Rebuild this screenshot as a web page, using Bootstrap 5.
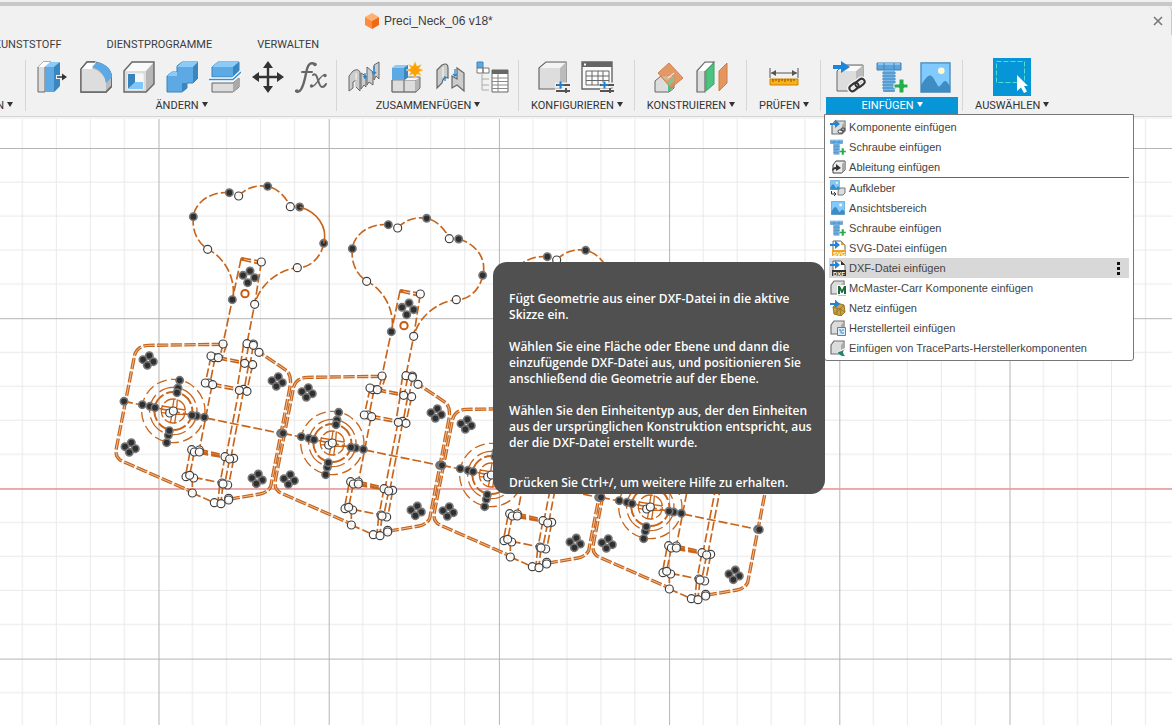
<!DOCTYPE html>
<html lang="de">
<head>
<meta charset="utf-8">
<meta name="viewport" content="width=device-width, initial-scale=1">
<title>Preci_Neck_06 v18*</title>
<link rel="stylesheet" href="https://cdn.jsdelivr.net/npm/bootstrap@5.3.0/dist/css/bootstrap.min.css">
<style>
  body { font-family: "Liberation Sans", Arial, sans-serif; font-size: 11px; line-height: 16px; color: #3c3c3c; background: #fff; }
  .app-header { background: #f1f1f1; border-bottom: 1px solid #d4d4d4; box-shadow: 0 2px 0 #f4f4f4; position: relative; z-index: 2; }
  .window-edge { height: 6px; background: #c8c8c8; border-top: 2px solid #f1f1f1; }
  .doc-bar { height: 29px; font-size: 12px; border-right: 1px solid #c8c8c8; border-top-right-radius: 5px; }
  .doc-title { margin-left: 364px; }
  .ws-tabs { height: 20px; gap: 45px; margin-left: -6px; font-family: Roboto, Arial, sans-serif; }
  .ws-tabs a { color: #3c3c3c; text-decoration: none; }
  .ribbon { height: 61px; }
  .tool-group { position: relative; padding: 2px 5px 0; }
  .tool-group::after { content: ""; position: absolute; right: 0; top: 5px; height: 51px; width: 1px; background: #d6d6d6; }
  .tool-group:last-child::after { display: none; }
  .cut-group { width: 26px; }
  .tool-btn { width: 43px; height: 40px; padding: 0; border: 0; background: none; }
  .tool-btn.picked svg { background: #0696d7; }
  .group-label { height: 17px; padding: 0 7px; border: 0; background: none; color: #333; white-space: nowrap; line-height: 17px; font-family: Roboto, Arial, sans-serif; }
  .group-label.opened { width: 132px; background: #0696d7; color: #fff; }
  .caret { display: inline-block; border: 3px solid transparent; border-top: 5px solid currentColor; border-bottom: 0; margin-left: 3px; vertical-align: 2px; }
  .insert-menu { position: absolute; left: 3px; top: 59px; width: 310px; background: #fff; border: 1px solid #777; border-radius: 0 0 3px 3px; padding: 2px 4px; z-index: 5; }
  .insert-menu button { height: 20px; width: 100%; padding: 0 6px 0 1px; border: 0; background: none; color: #444; text-align: left; gap: 3px; }
  .insert-menu button.hot { background: #d8d8d8; }
  .insert-menu hr { margin: 0; border-top: 1px solid #666; opacity: 1; }
  .hint { position: absolute; right: 100%; top: 147px; width: 332px; padding: 29px 10px 3px 16px; border-radius: 14px; background: #505050; color: #fff; font: 600 12px/16px "Open Sans", "Noto Sans", sans-serif; white-space: nowrap; }
  .hint p { margin: 0 0 16px; }
  .hint p:last-child { margin: 24px 0 0; }
  .sketch-area { height: calc(100vh - 117px); overflow: hidden; }
  .sketch-area svg { display: block; width: 100%; height: 100%; }
  .ln { fill: none; stroke: #c8651b; stroke-width: 5; stroke-dasharray: 27 9; }
  .solid { stroke-dasharray: none; }
  .dbl { fill: none; stroke: #c8651b; stroke-width: 10; stroke-dasharray: 34 7; }
  .core { fill: none; stroke: #fbe9da; stroke-width: 2; }
  .pts-o { fill: none; marker: url(#open); }
  .pts-f { fill: none; marker: url(#full); }
</style>
</head>
<body class="overflow-hidden">

<svg width="0" height="0" class="position-absolute" aria-hidden="true">
  <defs>
    <symbol id="cube" viewBox="0 0 32 32">
      <path d="M1 10 9 1H31L23 10z" fill="#fafafa"/><path d="M23 10 31 1V23L23 31z" fill="#b6b6b6"/><path d="M1 10H23V31H1z" fill="#dcdcdc"/>
      <path d="M1 10 9 1H31V23L23 31H1z" fill="none" stroke="#666" stroke-width="1.4"/>
    </symbol>
    <symbol id="screw" viewBox="0 0 32 32">
      <path d="M1 2H25V9H1z" fill="#5da4dc" stroke="#3f83b9"/><path d="M2 2H24V4H2z" fill="#8ac4ef"/><path d="M8 2V9M18 2V9" stroke="#3f83b9"/>
      <path d="M7 9H19V30L17 31H9L7 30z" fill="#78b6e6"/><path d="M6 12H20M6 15H20M6 18H20M6 21H20M6 24H20M6 27H20M7 30H19" stroke="#3f83b9"/>
      <path d="M23 18h5v5h4v4h-4v5h-5v-5h-5v-4h5z" fill="#23b04b" stroke="#f4f4f4"/>
    </symbol>
    <symbol id="photo" viewBox="0 0 32 32">
      <path d="M1 1H31V31H1z" fill="#80caff"/><path d="M1 24C5 18 8 13 11 14S17 23 19 25 24 18 27 20 30 24 31 25V31H1z" fill="#3d8cc4"/>
      <circle cx="22" cy="9" r="3.4" fill="#fff9d0"/><path d="M1 1H31V31H1z" fill="none" stroke="#4387b8" stroke-width="1.3"/>
    </symbol>
    <symbol id="part" viewBox="0 0 16 16">
      <path d="M1 5 4 1H14V11L11 14H1z" fill="#dcdcdc" stroke="#707070" stroke-width="1.2"/><path d="M11 5 14 1.500V11L11 13.500z" fill="#aaa"/>
    </symbol>
    <symbol id="arrow" viewBox="0 0 16 16"><path d="M0 4H5V0.500L10 5 5 9V6H0z" fill="#1c86dc"/></symbol>
    <symbol id="sheet" viewBox="0 0 16 16"><path d="M3 1H11L15 5V12H3z" fill="#fff" stroke="#666"/><path d="M11 1V5H15z" fill="currentColor"/></symbol>
    <marker id="open" viewBox="0 0 30 30" refX="15" refY="15" markerWidth="30" markerHeight="30" markerUnits="userSpaceOnUse"><circle cx="15" cy="15" r="12" fill="#fff" fill-opacity=".9" stroke="#404040" stroke-width="3.500"/></marker>
    <marker id="full" viewBox="0 0 30 30" refX="15" refY="15" markerWidth="30" markerHeight="30" markerUnits="userSpaceOnUse"><circle cx="15" cy="15" r="11" fill="#303030" stroke="#777" stroke-width="5"/></marker>
    <pattern id="grid" width="170.200" height="170.200" patternUnits="userSpaceOnUse" x="158.500" y="31">
      <path d="M34 0V171M68 0V171M102 0V171M136 0V171M0 34H171M0 68H171M0 102H171M0 136H171" stroke="#e9e9e9" fill="none"/>
      <path d="M0 0V171M0 0H171" stroke="#b4b4b4" stroke-width="2" fill="none"/>
    </pattern>

    <g id="cluster"><path class="pts-f" d="M3-15-16-3 15 3-3 14"/></g>

    <!-- one tuner head with its neck, three units per pixel -->
    <g id="head">
      <path class="ln" d="M400 375C404 315 368 258 323 238 290 215 276 180 280 140 285 95 335 63 388 68M416 78C440 52 470 44 503 49 535 55 560 85 571 110M671 220C665 260 630 295 592 293 540 298 480 340 464 403"/>
      <path class="ln" d="M423 267 397 389 369 521M427 264 484 274M427 270 480 282M484 276 464 403 441 520"/>
      <circle cx="427" cy="267" r="6" fill="#c8651b"/>
      <circle cx="435" cy="371" r="11" fill="#fff" stroke="#c85a10" stroke-width="6"/>
      <path class="pts-f" d="M388 68 503 49 599 111 671 220 280 140 397 389"/>
      <path class="pts-f" d="M450 303 429 316 464 323 443 338"/>
      <path class="pts-o" d="M416 78 571 110 323 238 592 293 484 276 464 403"/>
    </g>

    <!-- body plate -->
    <g id="plate">
      <path class="dbl" d="M369 43 145 46Q112 48 104 75L48 360Q46 385 68 394L277 486"/>
      <path class="dbl" d="M386 508 480 492Q502 488 512 470L571 165Q574 135 560 122L477 66"/>
      <path class="core" d="M369 43 145 46Q112 48 104 75L48 360Q46 385 68 394L277 486M386 508 480 492Q502 488 512 470L571 165Q574 135 560 122L477 66"/>
      <path class="ln" d="M72 214 547 311M277 489 343 518"/>
      <path class="ln" d="M369 42 359 84M381 42 366 84M431 42 422 100M446 46 436 100M460 46 450 104M333 80 316 159M345 84 330 160M355 80 434 96M355 87 434 102M338 160 418 175M338 168 418 182M424 100 410 181M446 104 432 181M458 104 441 181"/>
      <path class="ln" d="M336 166 298 360M417 181 378 380M431 181 392 387M298 358 375 376M298 364 375 382M298 370 389 386M270 366 256 440M283 366 268 440M281 442 366 459M281 366 279 376M375 380 360 459M389 387 374 462M401 387 386 465M277 444 277 489M359 465 354 515M369 465 363 515"/>
      <g fill="none" stroke="#c8651b" stroke-width="4">
        <circle cx="220" cy="243" r="95" stroke-dasharray="31 13"/><circle cx="220" cy="243" r="71" stroke-dasharray="58 14"/>
        <circle cx="220" cy="243" r="57" stroke-width="6" stroke-dasharray="40 9"/><circle cx="220" cy="243" r="36" stroke-dasharray="38 8"/>
        <path d="M222 207 218 233 185 228M232 208 230 236 256 240M211 279 216 251 186 248M224 281 228 252 254 254"/>
      </g>
      <path class="pts-f" d="M239 151 234 174 231 188M127 224 150 229 165 233M72 214 290 258 276 256 313 262M205 316 208 302 200 338M542 310 547 311"/>
      <use href="#cluster" x="145" y="92"/><use href="#cluster" x="532" y="155"/><use href="#cluster" x="91" y="353"/><use href="#cluster" x="472" y="447"/>
      <path class="pts-o" d="M369 42 460 42 441 41 460 46 477 67 342 83 333 78 355 83 458 104 434 100 327 159 316 159 338 164 431 178 441 184 418 181"/>
      <path class="pts-o" d="M209 249 220 243M275 359 298 360 283 366 298 366M375 380 401 385 389 387M258 440 281 444 269 436M366 459 383 465 369 462M277 489 343 518 363 521 386 505 386 510"/>
    </g>
    <g id="unit"><use href="#head" y="-480"/><use href="#plate"/></g>
  </defs>
</svg>

<header class="app-header">
  <div class="window-edge"></div>
  <div class="doc-bar d-flex align-items-center">
    <div class="doc-title d-flex align-items-center gap-1">
      <svg width="16" height="16" viewBox="0 0 16 16"><path d="M8 0 15 4 8 8 1 4z" fill="#ffb072"/><path d="M1 4 8 8V16L1 12z" fill="#ff8a3d"/><path d="M15 4V12L8 16V8z" fill="#f26a10"/></svg>
      <span>Preci_Neck_06 v18*</span>
    </div>
    <button class="tool-btn ms-auto w-auto h-auto px-2 py-1" aria-label="Schließen"><svg class="d-block" width="10" height="10" viewBox="0 0 10 10"><path d="M1 1 9 9M9 1 1 9" stroke="#777" stroke-width="1.600"/></svg></button>
  </div>
  <nav class="ws-tabs d-flex align-items-center" aria-label="Arbeitsbereiche">
    <a href="#">KUNSTSTOFF</a><a href="#">DIENSTPROGRAMME</a><a href="#">VERWALTEN</a>
  </nav>

  <div class="ribbon d-flex">
    <div class="tool-group cut-group d-flex flex-column align-items-end justify-content-start overflow-hidden">
      <div class="tool-btn"></div>
      <button class="group-label me-1 px-1">ERSTELLEN<span class="caret"></span></button>
    </div>

    <div class="tool-group d-flex flex-column align-items-center">
      <div class="d-flex">
        <button class="tool-btn" aria-label="Drücken/Ziehen"><svg width="32" height="32" viewBox="0 0 32 32"><path d="M1 6 6 1H14L8 6V31H1z" fill="#ddd" stroke="#666"/><path d="M1 6 6 1H14L8 6z" fill="#fff"/><path d="M8 6 14 1H22V26L17 31H8z" fill="#5ca9e4"/><path d="M8 6 13 1H23L17 6z" fill="#8ccbf8"/><path d="M17 6 23 1V25L17 31z" fill="#3a86c0"/><path d="M19 16H27" stroke="#f1f1f1" stroke-width="4"/><path d="M20 16H27" stroke="#333" stroke-width="1.500"/><path d="M25 12.500 30 16 25 19.500z" fill="#333"/></svg></button>
        <button class="tool-btn" aria-label="Abrundung"><svg width="32" height="32" viewBox="0 0 32 32"><path d="M1 8 7 1H14Q31 4 32 18V25L26 31H1z" fill="#bbb" stroke="#666" stroke-width="1.300"/><path d="M1 8H14Q25 12 26 22V31H1z" fill="#ddd"/><path d="M1 8 7 1H16L12 8z" fill="#fff"/><path d="M12 6 17 1Q31 4 32 16L26 22Q24 10 12 6z" fill="#5ca9e4"/><path d="M1 8 7 1H15M1 8V31H26L32 25V18" fill="none" stroke="#666" stroke-width="1.300"/></svg></button>
        <button class="tool-btn" aria-label="Schale"><svg width="32" height="32" viewBox="0 0 32 32"><use href="#cube"/><path d="M5 13H20V28H5z" fill="#fff" stroke="#fff"/><path d="M5 13H12V22L5 28z" fill="#3784bd"/><path d="M5 28 12 21H20V28z" fill="#80c6fb"/><path d="M12 13V21H20V13z" fill="#f7f7f7"/></svg></button>
        <button class="tool-btn" aria-label="Kombinieren"><svg width="32" height="32" viewBox="0 0 32 32"><path d="M1 15 6 11H11V5L16 1H32V17L27 22H21V27L16 31H1z" fill="#5ca9e4" stroke="#3b84bb"/><path d="M1 15 6 11H11V15zM11 6 16 1H32L27 6z" fill="#8ccbf8"/><path d="M27 6 32 1V17L27 22zM16 31V22H21V27z" fill="#3a86c0"/></svg></button>
        <button class="tool-btn" aria-label="Körper teilen"><svg width="32" height="32" viewBox="0 0 32 32"><path d="M3 6 9 1H30V10L24 16H3z" fill="#5ca9e4" stroke="#3b84bb"/><path d="M3 6 9 1H30L24 6z" fill="#8ccbf8"/><path d="M24 6 30 1V11L24 16z" fill="#3a86c0"/><path d="M3 22H24L30 17V26L24 31H3z" fill="#ddd" stroke="#666"/><path d="M24 22 30 17V26L24 31z" fill="#aaa"/><path d="M0 18.500H24L32 11" fill="none" stroke="#fff" stroke-width="4"/><path d="M0 18.500H24L32 11" fill="none" stroke="#3090dd" stroke-width="1.500"/></svg></button>
        <button class="tool-btn" aria-label="Verschieben"><svg width="32" height="32" viewBox="0 0 32 32"><path d="M16 4V28M4 16H28" stroke="#333" stroke-width="2.400"/><path d="M16 0 21 7H11zM16 32 21 25H11zM0 16 7 11V21zM32 16 25 11V21z" fill="#333"/></svg></button>
        <button class="tool-btn" aria-label="Parameter ändern"><svg width="32" height="32" viewBox="0 0 32 32"><g fill="none" stroke="#666" stroke-linecap="round"><path d="M1 30C5 33 8 26 10 17L12 8Q14 0 20 3" stroke-width="2.400"/><path d="M7 11H17M18 14C23 10 23 26 27 26 29 26 30 25 31 23" stroke-width="2"/><path d="M30 14C26 12 20 28 16 25" stroke-width="1.400"/></g><g fill="#666"><circle cx="20" cy="3.500" r="1.800"/><circle cx="30" cy="14.500" r="1.700"/><circle cx="16.500" cy="25" r="1.700"/><circle cx="2" cy="30" r="1.800"/></g></svg></button>
      </div>
      <button class="group-label">ÄNDERN<span class="caret"></span></button>
    </div>

    <div class="tool-group d-flex flex-column align-items-center">
      <div class="d-flex">
        <button class="tool-btn" aria-label="Gelenk"><svg width="32" height="32" viewBox="0 0 32 32"><g fill="#ccc" stroke="#666"><path d="M1 30V15L5 10Q10 7 12 11V30L8 26V19L5 21V27z"/><path d="M13 28V12L18 15V26L16 24z"/><path d="M19 24V6L25 11V24L21 21z"/><path d="M26 4 31 1V18L28 15 26 19z"/></g><path d="M8 12V26" stroke="#f5f5f5"/><path d="M17 12V18M15.500 15 17 17 18.500 15M26 5V13M24 11 26 13 28 11" fill="none" stroke="#2587d4" stroke-width="1.300"/></svg></button>
        <button class="tool-btn" aria-label="Neue Komponente"><svg width="32" height="32" viewBox="0 0 32 32"><path d="M1 19H13V31H1zM13 19H25V31H13z" fill="#ddd" stroke="#888"/><path d="M13 19 17 16H29L25 19z" fill="#f7f7f7"/><path d="M25 19 29 16V27L25 31z" fill="#b5b5b5"/><path d="M13 19 17 16H29V27L25 31H1V19" fill="none" stroke="#707070"/><path d="M1 7 5 4H17V16L13 19H1z" fill="#5ca9e4"/><path d="M1 7 5 4H17L13 7z" fill="#8ccbf8"/><path d="M13 7 17 4V16L13 19z" fill="#3a86c0"/><path d="M24 0 26 5 31 3 28 7.500 33 9 28 11 31 15 26 13 24 18 22 13 17 15 20 11 15 9 20 7 17 3 22 5z" fill="#fba200" stroke="#f1f1f1" stroke-width=".5"/></svg></button>
        <button class="tool-btn" aria-label="Wie gebaut"><svg width="32" height="32" viewBox="0 0 32 32"><g fill="#ccc" stroke="#666" stroke-width="1.200"><path d="M3 27V9L8 4Q14 1 14 7V17Q9 15 8 22z"/><path d="M18 27V15L23 18V7L30 12V30L23 24z"/></g><path d="M9 6V16" stroke="#fafafa"/><path d="M11 15V20M21 8V15M19 13 21 15 23 13" fill="none" stroke="#2587d4" stroke-width="1.300"/></svg></button>
        <button class="tool-btn" aria-label="Stückliste"><svg width="34" height="32" viewBox="0 0 34 32"><path d="M1 1H7V7H1z" fill="#5ca9e4" stroke="#3b84bb"/><path d="M1 7H7V12H1zM7 7H13V12H7z" fill="#fff" stroke="#777"/><path d="M6 13V29H13M6 18H13M6 24H13" fill="none" stroke="#aaa"/><path d="M16 9H32V31H16z" fill="#fff" stroke="#666"/><path d="M16 9H32V13H16z" fill="#666"/><path d="M16 17H32M16 20.500H32M16 24H32M16 27.500H32M22 13V31" stroke="#888"/></svg></button>
      </div>
      <button class="group-label">ZUSAMMENFÜGEN<span class="caret"></span></button>
    </div>

    <div class="tool-group d-flex flex-column align-items-center">
      <div class="d-flex">
        <button class="tool-btn" aria-label="Modell konfigurieren"><svg width="34" height="32" viewBox="0 0 34 32"><path d="M1 7 8 1H28V22L22 28H1z" fill="#ddd" stroke="#666" stroke-width="1.200"/><path d="M22 7 28 1V22L22 28z" fill="#bbb"/><path d="M2 7 8 2H27L22 7z" fill="#f4f4f4"/><path d="M17 24H33M17 30H33" stroke="#f1f1f1" stroke-width="5"/><path d="M18 24H32M18 30H32M28 27V32" stroke="#555" stroke-width="2"/><path d="M19 24H26M22.500 20.500V27.500" stroke="#1c7fd0" stroke-width="2"/></svg></button>
        <button class="tool-btn" aria-label="Konfigurationstabelle"><svg width="34" height="32" viewBox="0 0 34 32"><path d="M1 1H31V28H1z" fill="#fbfbfb" stroke="#666" stroke-width="1.400"/><path d="M1 1H31V6H1z" fill="#666"/><path d="M3 3.500H5" stroke="#fff" stroke-width="2"/><path d="M5 10H28V24H5zM5 15H28M5 19.500H28M11 10V24M17 10V24M22 10V24" fill="none" stroke="#666"/><path d="M19 24H34M19 30H34" stroke="#f1f1f1" stroke-width="5"/><path d="M19 24H33M19 30H33M29 27V32" stroke="#555" stroke-width="2"/><path d="M20 24H27M23.500 20.500V27.500" stroke="#1c7fd0" stroke-width="2"/></svg></button>
      </div>
      <button class="group-label">KONFIGURIEREN<span class="caret"></span></button>
    </div>

    <div class="tool-group d-flex flex-column align-items-center">
      <div class="d-flex">
        <button class="tool-btn" aria-label="Versatzebene"><svg width="32" height="32" viewBox="0 0 32 32"><path d="M2 20 8 15H21V27L16 31H2z" fill="#ddd" stroke="#666"/><path d="M15 21 21 15V26L15 31z" fill="#50bd7c"/><path d="M5 12 16 2 30 17 18 27z" fill="#e29059" fill-opacity=".92" stroke="#cf8252"/><path d="M9 15H20L14 20 11 18z" fill="#d9b493"/><path d="M15 21 21 14V20L16 25z" fill="#82c594"/><path d="M15 17 21 12" stroke="#fff"/></svg></button>
        <button class="tool-btn" aria-label="Mittelebene"><svg width="32" height="32" viewBox="0 0 32 32"><path d="M1 10 9 1H18L9 10V31H1z" fill="#ddd" stroke="#666" stroke-width="1.200"/><path d="M2 10 9 2H17L9 10z" fill="#fff"/><path d="M10 10 18 2V23L10 30z" fill="#4dc281" stroke="#39a368"/><path d="M23 10 31 2V22L23 30z" fill="#e5965f" stroke="#d17b43"/></svg></button>
      </div>
      <button class="group-label">KONSTRUIEREN<span class="caret"></span></button>
    </div>

    <div class="tool-group d-flex flex-column align-items-center">
      <button class="tool-btn" aria-label="Messen"><svg width="32" height="32" viewBox="0 0 32 32"><path d="M2 7V17M30 7V17M3 12H29" stroke="#555"/><path d="M3 12 8 9V15zM29 12 24 9V15z" fill="#555"/><path d="M2 18H30V24H2z" fill="#fbb01a" stroke="#cc8300"/><path d="M5 18V21M8 18V20M11 18V21M14 18V20M17 18V21M20 18V20M23 18V21M26 18V20" stroke="#7d5000"/></svg></button>
      <button class="group-label">PRÜFEN<span class="caret"></span></button>
    </div>

    <div class="tool-group d-flex flex-column align-items-center">
      <div class="d-flex">
        <button class="tool-btn" aria-label="Komponente einfügen"><svg width="34" height="34" viewBox="0 0 34 34"><path d="M5 11 12 5H31V25L25 31H5z" fill="#ddd" stroke="#666"/><path d="M24 11 31 5V24L24 31z" fill="#bbb"/><path d="M6 11 12 6H30L24 11z" fill="#fafafa"/><path d="M1 5H9V1L18 7 9 13V9H1z" fill="#1c86dc"/><g fill="none" stroke="#f1f1f1" stroke-width="5"><rect x="17" y="24" width="10" height="6" rx="3" transform="rotate(-38 22 27)"/><rect x="23" y="20" width="10" height="6" rx="3" transform="rotate(-38 28 23)"/></g><g fill="none" stroke="#333" stroke-width="2"><rect x="17" y="24" width="10" height="6" rx="3" transform="rotate(-38 22 27)"/><rect x="23" y="20" width="10" height="6" rx="3" transform="rotate(-38 28 23)"/></g></svg></button>
        <button class="tool-btn" aria-label="Schraube einfügen"><svg width="32" height="32"><use href="#screw"/></svg></button>
        <button class="tool-btn" aria-label="Ansichtsbereich"><svg width="31" height="31"><use href="#photo"/></svg></button>
      </div>
      <button class="group-label opened" aria-expanded="true">EINFÜGEN<span class="caret"></span></button>

      <div class="insert-menu">
        <ul class="list-unstyled m-0">
          <li><button class="d-flex align-items-center"><svg width="16" height="16" viewBox="0 0 16 16"><use href="#part" x="1" y="1"/><use href="#arrow"/><g fill="none" stroke="#333"><rect x="8" y="11" width="5" height="3" rx="1.500" fill="#fff"/><rect x="11" y="9" width="4" height="3" rx="1.500"/></g></svg>Komponente einfügen</button></li>
          <li><button class="d-flex align-items-center"><svg width="16" height="16"><use href="#screw"/></svg>Schraube einfügen</button></li>
          <li><button class="d-flex align-items-center"><svg width="16" height="16" viewBox="0 0 16 16"><path d="M3 6 6 2H15V11L12 14H3z" fill="#eee" stroke="#444"/><path d="M12 5 15 2V11L12 14z" fill="#aaa"/><path d="M2 12Q2 8 6 8V5L11 9 6 12V10Q4 10 2 12z" fill="#333"/></svg>Ableitung einfügen</button></li>
        </ul>
        <hr>
        <ul class="list-unstyled m-0">
          <li><button class="d-flex align-items-center"><svg width="16" height="16" viewBox="0 0 16 16"><use href="#photo" width="10" height="10"/><path d="M8 11 10 8H15V13L13 15H8z" fill="#ddd" stroke="#777"/><path d="M1.500 11V14H5M4 12 6 14 4 16" fill="none" stroke="#333"/></svg>Aufkleber</button></li>
          <li><button class="d-flex align-items-center"><svg width="16" height="16"><use href="#photo" x="1" y="1" width="14" height="14"/></svg>Ansichtsbereich</button></li>
          <li><button class="d-flex align-items-center"><svg width="16" height="16"><use href="#screw"/></svg>Schraube einfügen</button></li>
          <li><button class="d-flex align-items-center"><svg width="16" height="16" viewBox="0 0 16 16" color="#f0a020"><use href="#sheet"/><use href="#arrow"/><path d="M2 10H16V16H2z" fill="#f0a020"/><text x="3" y="15.500" font-size="6" font-weight="700" fill="#fff">SVG</text></svg>SVG-Datei einfügen</button></li>
          <li><button class="hot d-flex align-items-center"><svg width="16" height="16" viewBox="0 0 16 16" color="#333"><use href="#sheet"/><use href="#arrow"/><path d="M2 10H16V16H2z" fill="#333"/><text x="3" y="15.500" font-size="6" font-weight="700" fill="#fff">DXF</text></svg>DXF-Datei einfügen<svg class="ms-auto" width="10" height="13" viewBox="0 0 10 13"><path d="M4 0H7V3H4zM4 5H7V8H4zM4 10H7V13H4z" fill="#111"/></svg></button></li>
          <li><button class="d-flex align-items-center"><svg width="16" height="16" viewBox="0 0 16 16"><use href="#part"/><path d="M7 5H16V16H7z" fill="#fff"/><path d="M8 14V6H10L12 10 14 6H16V14H14V10L12.500 13H11.500L10 10V14z" fill="#1e6b3c"/><path d="M8 15.500H16" stroke="#e8c94e"/></svg>McMaster-Carr Komponente einfügen</button></li>
          <li><button class="d-flex align-items-center"><svg width="16" height="16" viewBox="0 0 16 16"><path d="M3 7 7 3 14 5 15 12 11 16 4 14z" fill="#c9a245" stroke="#9b7622"/><path d="M3 7 10 9 14 5M10 9 11 16M4 14 10 9 15 12M7 8V15" fill="none" stroke="#8a6a20" stroke-width=".7"/><use href="#arrow" y="-1"/></svg>Netz einfügen</button></li>
          <li><button class="d-flex align-items-center"><svg width="16" height="16" viewBox="0 0 16 16"><use href="#part"/><path d="M7.500 7.500H15.500V15.500H7.500z" fill="#d8ecfb" stroke="#4b87b5"/><path d="M9 10H11V13H14M12 10H14" fill="none" stroke="#4b87b5"/></svg>Herstellerteil einfügen</button></li>
          <li><button class="d-flex align-items-center"><svg width="16" height="16" viewBox="0 0 16 16"><use href="#part"/><path d="M15 8V16L7 12z" fill="#fff"/><path d="M15 9Q11 12 15 16H12Q8 14 8 12 11 12 15 9z" fill="#25836d"/></svg>Einfügen von TraceParts-Herstellerkomponenten</button></li>
        </ul>

        <div class="hint" role="tooltip">
          <p>Fügt Geometrie aus einer DXF-Datei in die aktive<br>Skizze ein.</p>
          <p>Wählen Sie eine Fläche oder Ebene und dann die<br>einzufügende DXF-Datei aus, und positionieren Sie<br>anschließend die Geometrie auf der Ebene.</p>
          <p>Wählen Sie den Einheitentyp aus, der den Einheiten<br>aus der ursprünglichen Konstruktion entspricht, aus<br>der die DXF-Datei erstellt wurde.</p>
          <p>Drücken Sie Ctrl+/, um weitere Hilfe zu erhalten.</p>
        </div>
      </div>
    </div>

    <div class="tool-group d-flex flex-column align-items-center">
      <button class="tool-btn picked" aria-label="Auswählen"><svg width="38" height="38" viewBox="0 0 38 38"><path d="M3.500 3.500H31.500V24.500H3.500z" fill="none" stroke="#50e0d0" stroke-dasharray="5 2"/><path d="M24 17V33L28 29.500 31 35 34 33.500 31 28H35z" fill="#fff"/></svg></button>
      <button class="group-label">AUSWÄHLEN<span class="caret"></span></button>
    </div>
  </div>
</header>

<main class="sketch-area">
  <svg role="img" aria-label="Skizze">
    <rect width="100%" height="100%" fill="url(#grid)"/>
    <path d="M0 372H4000" stroke="#f39a9a" stroke-width="1.500"/>
    <g transform="translate(100 213) scale(.333333)">
      <use href="#unit"/>
      <path class="ln solid" d="M599 -369C650 -355 685 -310 671 -260"/>
      <path class="ln" d="M1076 -273C1127 -259 1162 -214 1148 -164"/>
      <use href="#unit" x="477" y="96"/><use href="#unit" x="954" y="192"/><use href="#unit" x="1431" y="288"/>
    </g>
  </svg>
</main>

<script src="https://cdn.jsdelivr.net/npm/bootstrap@5.3.0/dist/js/bootstrap.bundle.min.js"></script>
</body>
</html>
